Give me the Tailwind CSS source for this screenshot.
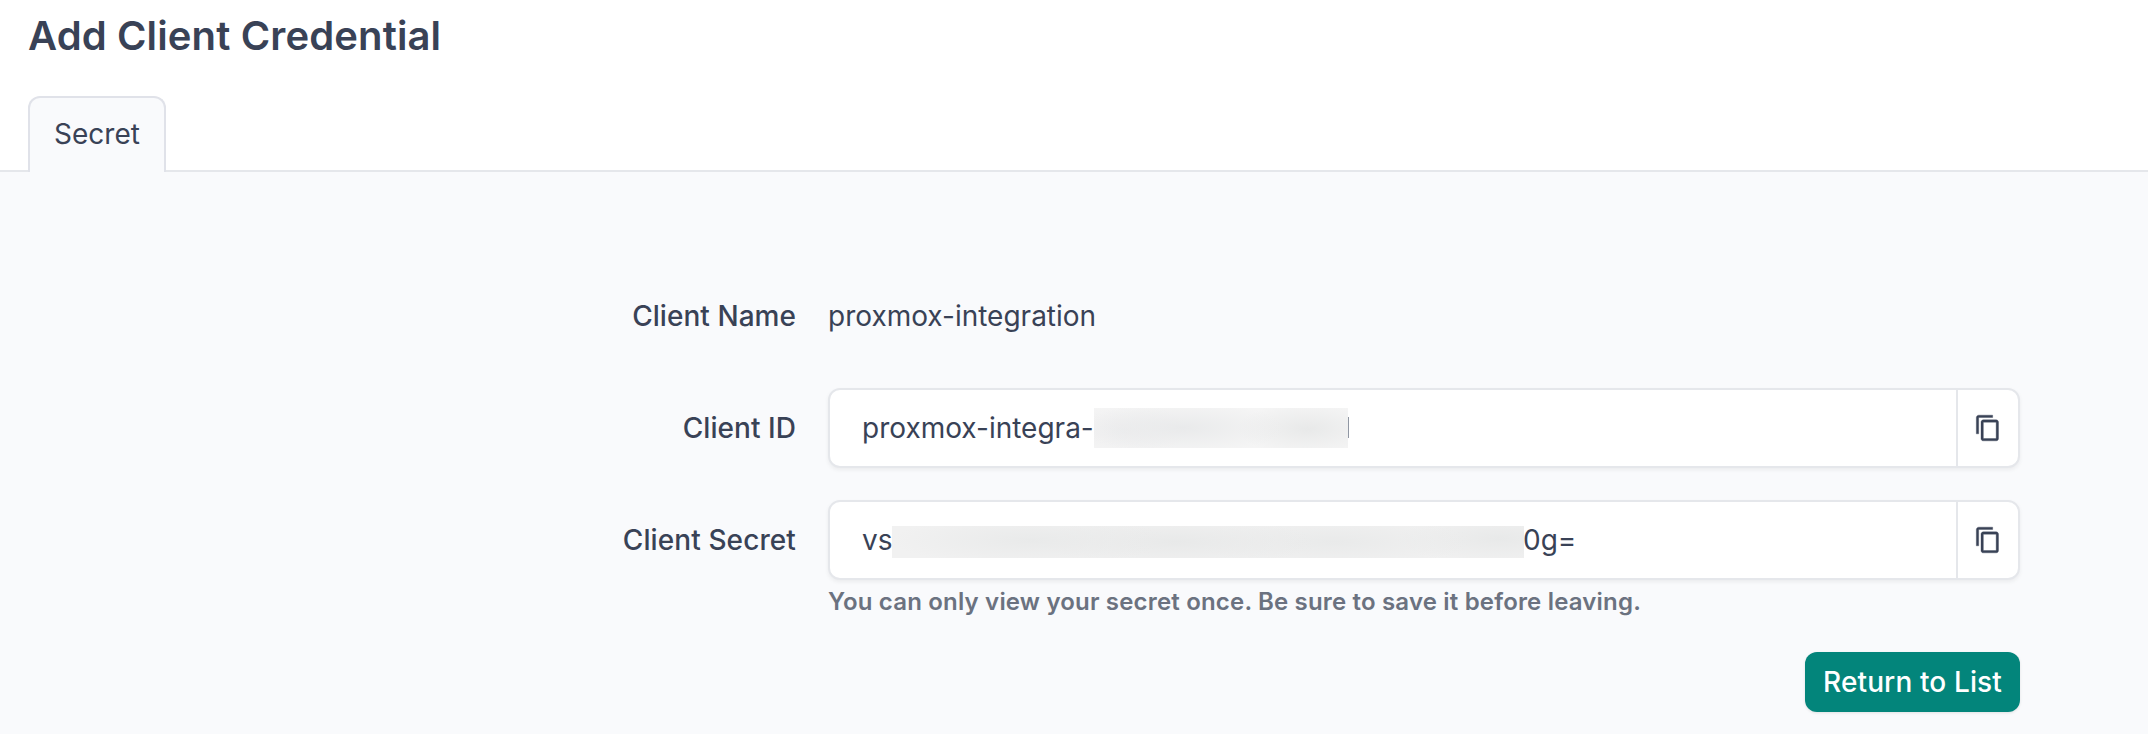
<!DOCTYPE html>
<html lang="en">
<head>
    <meta charset="UTF-8">
    <meta name="viewport" content="width=device-width, initial-scale=1.0">
    <title>Add Client Credential</title>
    <script src="https://cdn.jsdelivr.net/npm/@tailwindcss/browser@4"></script>
</head>
<body class="min-h-screen overflow-hidden bg-[#f9fafc] font-['Inter',sans-serif] text-[28px] leading-10 text-[#394256]">
    <header class="flex h-[172px] flex-col justify-between border-b-2 border-[#e5e7eb] bg-white px-7">
        <h1 class="pt-3 text-[40px] leading-12 font-semibold tracking-[0.13px]">Add Client Credential</h1>
        <nav class="-mb-0.5 flex">
            <a href="#secret" class="flex h-19 w-[138px] items-center justify-center rounded-t-xl border-2 border-b-0 border-[#e0e2e9] bg-[#f9fafc] pb-0.5">Secret</a>
        </nav>
    </header>

    <main class="w-[2020px] pt-[116px]">
        <div class="grid grid-cols-[796px_1192px] gap-x-8">
            <div class="flex h-14 items-center justify-end font-medium tracking-[0.05px]">Client Name</div>
            <div class="flex h-14 items-center">proxmox-integration</div>

            <label class="mt-11 flex h-20 items-center justify-end font-medium tracking-[0.05px]">Client ID</label>
            <div class="mt-11 flex h-20 overflow-hidden rounded-xl border-2 border-[#e5e7eb] bg-white shadow-[0_2px_4px_rgba(0,0,0,0.06)]">
                <div class="flex flex-1 items-center pl-8">
                    <span class="w-[232px] whitespace-nowrap">proxmox-integra-</span>
                    <span class="h-10 w-[254px] bg-[#f5f5f5] bg-[radial-gradient(40%_65%_at_35%_50%,#e9eaeb_0%,transparent_100%),radial-gradient(28%_65%_at_84%_52%,#e8e9e9_0%,transparent_100%),radial-gradient(25%_65%_at_12%_55%,#ededee_0%,transparent_100%)]"></span>
                    <span class="mb-px h-[21px] w-px bg-[#9097a3]"></span>
                </div>
                <button class="flex w-[62px] items-center justify-center border-l-2 border-[#e5e7eb] pb-px" aria-label="Copy client ID">
                    <svg class="size-7" viewBox="0 0 24 24" fill="currentColor" stroke="currentColor" stroke-width="0.3"><path d="M16 1H4c-1.1 0-2 .9-2 2v14h2V3h12V1zm3 4H8c-1.1 0-2 .9-2 2v14c0 1.1.9 2 2 2h11c1.1 0 2-.9 2-2V7c0-1.1-.9-2-2-2zm0 16H8V7h11v14z"/></svg>
                </button>
            </div>

            <label class="mt-8 flex h-20 items-center justify-end font-medium tracking-[0.1px]">Client Secret</label>
            <div class="mt-8 flex h-20 overflow-hidden rounded-xl border-2 border-[#e5e7eb] bg-white shadow-[0_2px_4px_rgba(0,0,0,0.06)]">
                <div class="flex flex-1 items-center pl-8">
                    <span class="w-[30px]">vs</span>
                    <span class="mt-1 h-8 w-[632px] bg-[#f1f1f1] bg-[radial-gradient(22%_80%_at_22%_45%,#e9eaea_0%,transparent_100%),radial-gradient(22%_80%_at_45%_50%,#e8e9e9_0%,transparent_100%),radial-gradient(22%_80%_at_70%_50%,#e9eaea_0%,transparent_100%),radial-gradient(16%_80%_at_96%_40%,#e8e9e9_0%,transparent_100%)]"></span>
                    <span class="-ml-px">0g=</span>
                </div>
                <button class="flex w-[62px] items-center justify-center border-l-2 border-[#e5e7eb] pb-px" aria-label="Copy client secret">
                    <svg class="size-7" viewBox="0 0 24 24" fill="currentColor" stroke="currentColor" stroke-width="0.3"><path d="M16 1H4c-1.1 0-2 .9-2 2v14h2V3h12V1zm3 4H8c-1.1 0-2 .9-2 2v14c0 1.1.9 2 2 2h11c1.1 0 2-.9 2-2V7c0-1.1-.9-2-2-2zm0 16H8V7h11v14z"/></svg>
                </button>
            </div>

            <p class="col-start-2 mt-1 text-2xl leading-9 font-semibold tracking-[0.18px] text-[#6b7280]">You can only view your secret once. Be sure to save it before leaving.</p>
        </div>

        <div class="mt-8 flex justify-end">
            <button class="h-15 w-[215px] rounded-xl bg-[#03857b] font-medium tracking-[0.12px] text-white shadow-[0_1px_3px_rgba(0,0,0,0.1)]">Return to List</button>
        </div>
    </main>
</body>
</html>
